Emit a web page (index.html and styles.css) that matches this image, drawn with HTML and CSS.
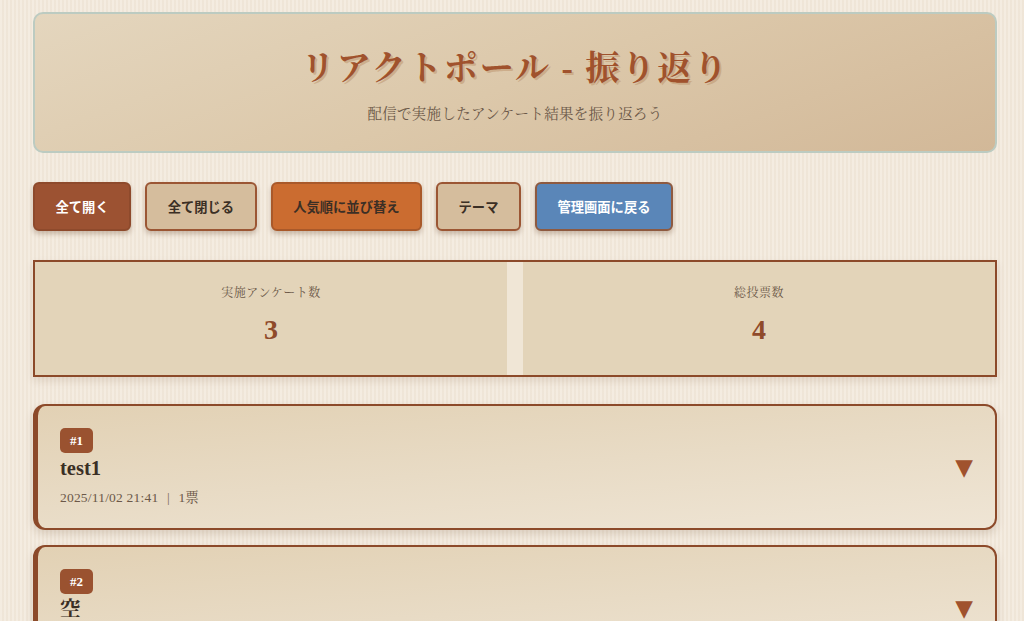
FILE: index.html
```html
<!DOCTYPE html>
<html lang="ja">
<head>
<meta charset="utf-8">
<title>リアクトポール - 振り返り</title>
<link rel="stylesheet" href="styles.css">
</head>
<body>
<div class="page">
  <header class="hero">
    <h1 class="hero-title">リアクトポール - 振り返り</h1>
    <p class="hero-sub">配信で実施したアンケート結果を振り返ろう</p>
  </header>

  <div class="toolbar">
    <button class="btn btn-primary">全て開く</button>
    <button class="btn btn-tan">全て閉じる</button>
    <button class="btn btn-orange">人気順に並び替え</button>
    <button class="btn btn-tan">テーマ</button>
    <button class="btn btn-blue">管理画面に戻る</button>
  </div>

  <section class="stats">
    <div class="stat">
      <div class="stat-label">実施アンケート数</div>
      <div class="stat-value">3</div>
    </div>
    <div class="stat">
      <div class="stat-label">総投票数</div>
      <div class="stat-value">4</div>
    </div>
  </section>

  <div class="polls">
    <article class="poll">
      <div class="poll-main">
        <span class="badge">#1</span>
        <h2 class="poll-title">test1</h2>
        <div class="poll-meta">2025/11/02 21:41 <span class="sep">|</span> 1票</div>
      </div>
      <span class="arrow">▼</span>
    </article>
    <article class="poll">
      <div class="poll-main">
        <span class="badge">#2</span>
        <h2 class="poll-title">空</h2>
        <div class="poll-meta">2025/11/02 21:30 <span class="sep">|</span> 0票</div>
      </div>
      <span class="arrow">▼</span>
    </article>
  </div>
</div>
</body>
</html>
```

FILE: styles.css
```css
* { box-sizing: border-box; }

html, body { height: 100%; }

body {
  margin: 0;
  padding: 12px 0 0 33px;
  overflow: hidden;
  font-family: "Liberation Serif", "Noto Serif CJK JP", "Noto Sans CJK JP", serif;
  color: #3b2f25;
  background-color: #f2e8da;
  background-image: repeating-linear-gradient(90deg, rgba(255,255,255,0.18) 0 2px, rgba(0,0,0,0.012) 2px 4px);
}

.page { width: 964px; }

.hero {
  height: 141px;
  border: 2px solid #bccbc1;
  border-radius: 10px;
  background: linear-gradient(160deg, #e4d6be 0%, #dcc8aa 50%, #d2b898 100%);
  display: flex;
  flex-direction: column;
  align-items: center;
  padding-top: 31px;
}

.hero-title {
  margin: 0;
  font-size: 34px;
  line-height: 48px;
  font-weight: 700;
  letter-spacing: 2px;
  color: #a0522d;
  text-shadow: 2px 2px 0 rgba(190, 150, 110, 0.55);
}

.hero-sub {
  margin: 10px 0 0;
  font-size: 14.5px;
  line-height: 22px;
  color: #6b5848;
  letter-spacing: 0.3px;
}

.toolbar {
  display: flex;
  gap: 14px;
  margin-top: 29px;
}

.btn {
  height: 49px;
  padding: 0 20.5px;
  border: 2px solid #9b5634;
  border-radius: 6px;
  font-family: "Noto Sans CJK JP", "Noto Sans", sans-serif;
  font-size: 13.3px;
  font-weight: 700;
  color: #3b2f25;
  box-shadow: 0 3px 5px rgba(90, 50, 20, 0.28);
  cursor: pointer;
}

.btn-primary { background: #9c5232; color: #fff; border-color: #8e4a2c; }
.btn-tan { background: #d5bd9d; }
.btn-orange { background: #cb6c30; border-color: #a9592a; }
.btn-blue { background: #5a86b8; color: #fff; border-color: #8e5a40; }

.stats {
  margin-top: 29px;
  height: 117px;
  border: 2px solid #8c4a2a;
  background: #f0e6d6;
  display: grid;
  grid-template-columns: 1fr 1fr;
  gap: 16px;
  box-shadow: 0 4px 8px rgba(90, 50, 20, 0.12);
}

.stat {
  background: #e3d4b9;
  text-align: center;
  padding-top: 22px;
}

.stat-label {
  font-size: 12px;
  line-height: 18px;
  letter-spacing: 0.5px;
  color: #6b5848;
}

.stat-value {
  margin-top: 10px;
  font-size: 28px;
  line-height: 36px;
  font-weight: 700;
  color: #8f4a2a;
}

.polls {
  margin-top: 27px;
  display: flex;
  flex-direction: column;
  gap: 15px;
}

.poll {
  height: 126px;
  border: 2px solid #8c4a2a;
  border-left-width: 5px;
  border-radius: 12px;
  background: linear-gradient(175deg, #e2d1b4 0%, #e8dbc5 50%, #efe5d5 100%);
  box-shadow: 0 4px 8px rgba(90, 50, 20, 0.16);
  display: flex;
  align-items: center;
  padding: 0 22px 0 22px;
  flex-shrink: 0;
}

.poll-main {
  flex: 1;
  display: flex;
  flex-direction: column;
  align-items: flex-start;
}

.badge {
  display: inline-block;
  height: 25px;
  line-height: 25px;
  padding: 0 10px;
  border-radius: 5px;
  background: #9a5230;
  color: #fff;
  font-size: 13px;
  font-weight: 700;
}

.poll-title {
  margin: 3px 0 0;
  font-size: 20.5px;
  line-height: 25px;
  font-weight: 700;
  color: #3b2f25;
}

.poll-meta {
  margin-top: 8px;
  font-size: 13.5px;
  line-height: 18px;
  color: #6b5848;
  letter-spacing: 0.2px;
}

.sep {
  margin: 0 5px;
  color: #7a6756;
}

.arrow {
  font-family: "DejaVu Sans", sans-serif;
  font-size: 23px;
  color: #a0522d;
  line-height: 1;
}
```
